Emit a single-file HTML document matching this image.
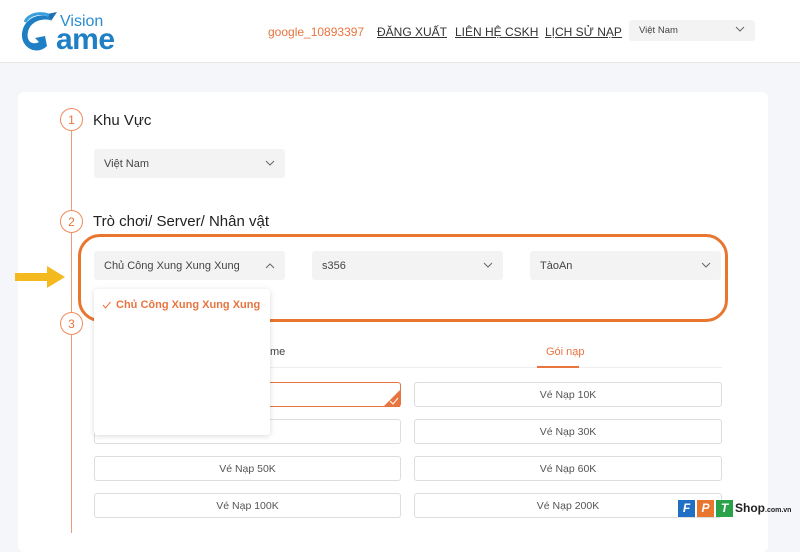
<!DOCTYPE html>
<html><head><meta charset="utf-8"><style>
*{box-sizing:border-box;margin:0;padding:0}
body{width:800px;height:533px;overflow:hidden;background:#f4f6f9;font-family:"Liberation Sans","Noto Sans CJK SC",sans-serif;position:relative}
.hdr{position:absolute;left:0;top:0;width:800px;height:63px;background:#fff;border-bottom:1px solid #e6e6e6}
.nav{position:absolute;top:25px;font-size:12px;color:#333;text-decoration:underline}
.card{position:absolute;left:18px;top:92px;width:750px;height:460px;background:#fff;border-radius:6px}
.circ{position:absolute;left:60px;width:23px;height:23px;border:1px solid #ef8a5a;border-radius:50%;color:#e8743f;font-size:12px;text-align:center;line-height:22px;background:#fff}
.vline{position:absolute;left:71px;width:1px;background:#ef9d77}
.h{position:absolute;left:93px;font-size:15px;color:#222}
.sel{position:absolute;height:29px;background:#f3f3f3;border-radius:3px;font-size:11px;color:#444;padding-left:10px;line-height:30px}
.sel svg{position:absolute;right:10px;top:11px}
.box{position:absolute;height:25px;border:1px solid #ddd;border-radius:3px;font-size:10.5px;color:#555;text-align:center;line-height:25px;background:#fff}
</style></head><body>
<div class="hdr">
<svg style="position:absolute;left:17px;top:8px" width="40" height="46" viewBox="0 0 40 46"><path d="M30 6 L40 4 L34 13 Z" fill="#1f6fb2"/><path d="M33 9 C20 4 6 12 5 26 C4 40 20 48 30 38 L28 28 L18 30 L22 34 C14 38 9 32 11 24 C13 14 24 10 33 12 Z" fill="#1f7fc4"/><path d="M8 14 C12 6 22 4 32 7" stroke="#3aa0dd" stroke-width="3" fill="none"/></svg>
<div style="position:absolute;left:60px;top:13px;font-size:16px;color:#2a8bd0">Vision</div>
<div style="position:absolute;left:56px;top:23px;font-size:30px;font-weight:bold;color:#1f7fc4;letter-spacing:-0.5px">ame</div>
<div class="nav" style="left:268px;color:#e8743f;text-decoration:none">google_10893397</div>
<div class="nav" style="left:377px">ĐĂNG XUẤT</div>
<div class="nav" style="left:455px">LIÊN HỆ CSKH</div>
<div class="nav" style="left:545px">LỊCH SỬ NẠP</div>
<div class="sel" style="left:629px;top:20px;width:126px;height:21px;line-height:22px;font-size:9.5px">Việt Nam<svg style="top:6px" width="10" height="7" viewBox="0 0 10 7"><path d="M1 1l4 4 4-4" stroke="#666" fill="none"/></svg></div>
</div>
<div class="card"></div>
<div class="vline" style="top:131px;height:402px"></div>
<div class="circ" style="top:108px">1</div>
<div class="circ" style="top:210px">2</div>
<div class="circ" style="top:312px">3</div>
<div class="h" style="top:112px">Khu Vực</div>
<div class="h" style="top:213px">Trò chơi/ Server/ Nhân vật</div>
<div class="sel" style="left:94px;top:149px;width:191px">Việt Nam<svg width="10" height="7" viewBox="0 0 10 7"><path d="M1 1l4 4 4-4" stroke="#666" fill="none"/></svg></div>
<div class="sel" style="left:94px;top:251px;width:191px">Chủ Công Xung Xung Xung<svg width="10" height="7" viewBox="0 0 10 7"><path d="M1 6l4-4 4 4" stroke="#666" fill="none"/></svg></div>
<div class="sel" style="left:312px;top:251px;width:191px">s356<svg width="10" height="7" viewBox="0 0 10 7"><path d="M1 1l4 4 4-4" stroke="#666" fill="none"/></svg></div>
<div class="sel" style="left:530px;top:251px;width:191px">TàoAn<svg width="10" height="7" viewBox="0 0 10 7"><path d="M1 1l4 4 4-4" stroke="#666" fill="none"/></svg></div>
<div style="position:absolute;left:78px;top:234px;width:650px;height:88px;border:3px solid #e8762f;border-radius:22px"></div>
<svg style="position:absolute;left:15px;top:266px" width="50" height="22" viewBox="0 0 50 22"><path d="M0 7h32V0l18 11-18 11v-7H0z" fill="#f4b91f"/></svg>
<div style="position:absolute;left:270px;top:346px;font-size:11px;color:#444">me</div>
<div style="position:absolute;left:546px;top:346px;font-size:11px;color:#e8743f">Gói nạp</div>
<div style="position:absolute;left:248px;top:367px;width:474px;height:1px;background:#eee"></div>
<div style="position:absolute;left:537px;top:366px;width:42px;height:2px;background:#e8743f"></div>
<div class="box" style="left:94px;top:382px;width:307px;border-color:#e8743f">K</div>
<div style="position:absolute;left:383px;top:390px;width:0;height:0;border-left:17px solid transparent;border-bottom:17px solid #e8743f"></div>
<svg style="position:absolute;left:389px;top:397px" width="10" height="8" viewBox="0 0 10 8"><path d="M1 4l3 3 5-6" stroke="#fff" fill="none"/></svg>
<div class="box" style="left:414px;top:382px;width:308px">Vé Nạp 10K</div>
<div class="box" style="left:94px;top:419px;width:307px">K</div>
<div class="box" style="left:414px;top:419px;width:308px">Vé Nạp 30K</div>
<div class="box" style="left:94px;top:456px;width:307px">Vé Nạp 50K</div>
<div class="box" style="left:414px;top:456px;width:308px">Vé Nạp 60K</div>
<div class="box" style="left:94px;top:493px;width:307px">Vé Nạp 100K</div>
<div class="box" style="left:414px;top:493px;width:308px">Vé Nạp 200K</div>
<div style="position:absolute;left:94px;top:289px;width:176px;height:146px;background:#fff;border-radius:3px;box-shadow:0 1px 6px rgba(0,0,0,.15)"></div>
<svg style="position:absolute;left:102px;top:301px" width="9" height="8" viewBox="0 0 9 8"><path d="M1 4l2.5 3 5-6" stroke="#e8743f" fill="none"/></svg>
<div style="position:absolute;left:116px;top:299px;font-size:11px;font-weight:bold;color:#e8743f">Chủ Công Xung Xung Xung</div>
<div style="position:absolute;left:678px;top:500px;display:flex;gap:2px"><div style="width:17px;height:17px;background:#1f6fc4;color:#fff;font-weight:bold;font-size:12px;text-align:center;line-height:17px;font-style:italic">F</div><div style="width:17px;height:17px;background:#e8762f;color:#fff;font-weight:bold;font-size:12px;text-align:center;line-height:17px;font-style:italic">P</div><div style="width:17px;height:17px;background:#2aa24a;color:#fff;font-weight:bold;font-size:12px;text-align:center;line-height:17px;font-style:italic">T</div></div>
<div style="position:absolute;left:735px;top:501px;font-size:12px;font-weight:bold;color:#222">Shop<span style="font-size:7px">.com.vn</span></div>
</body></html>
